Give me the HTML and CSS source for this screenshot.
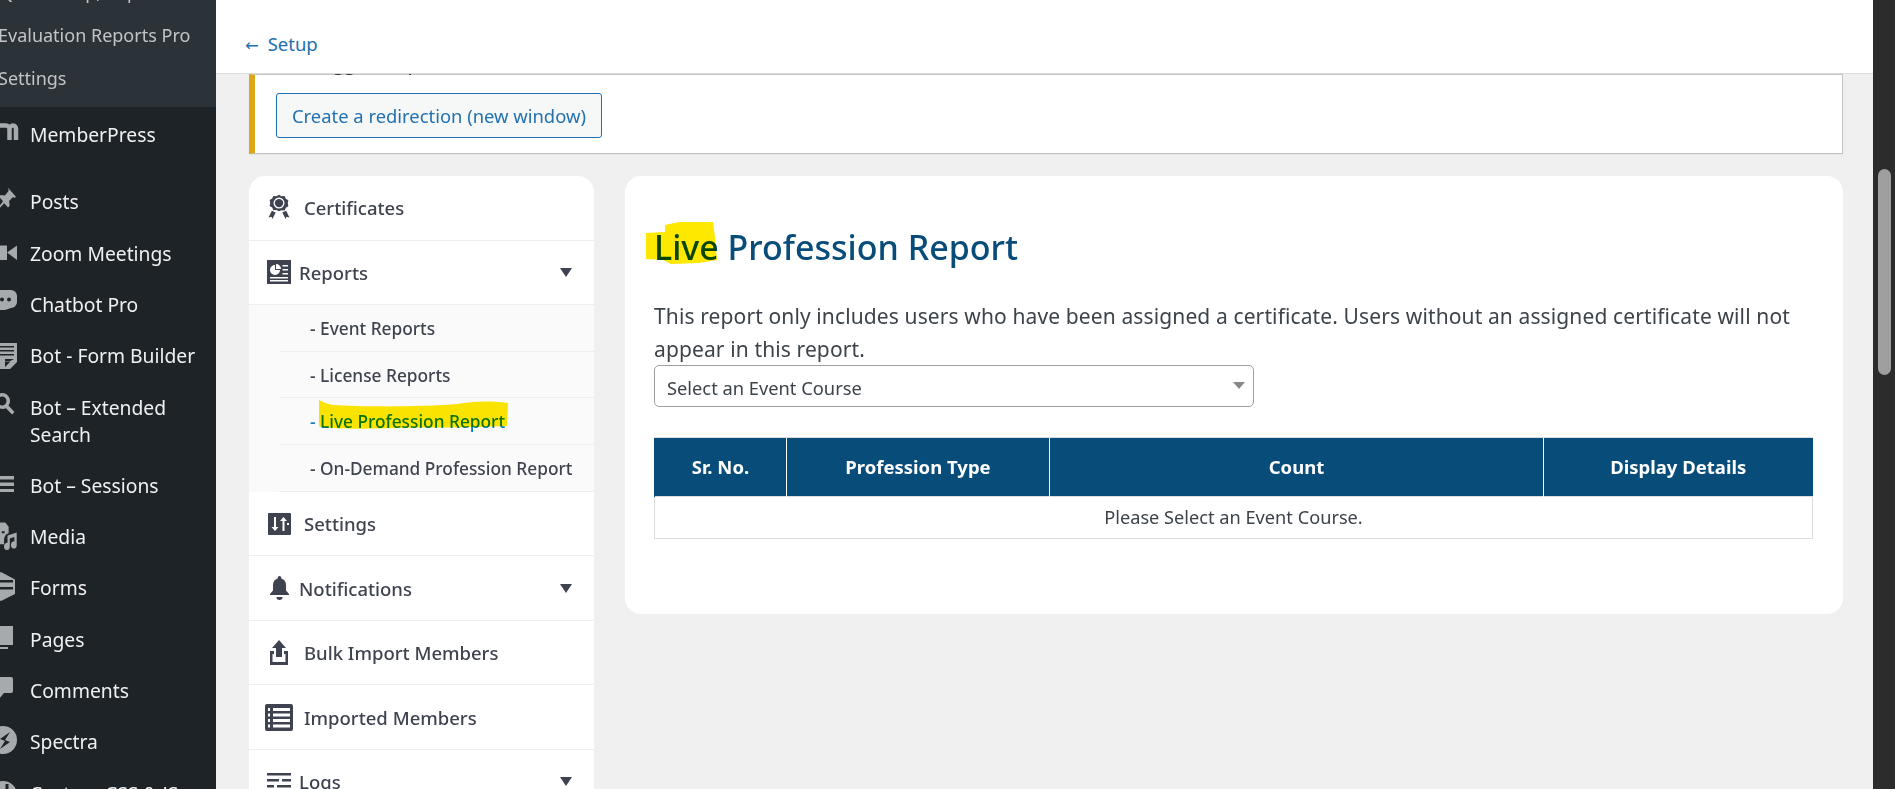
FILE: index.html
```html
<!DOCTYPE html>
<html lang="en">
<head>
<meta charset="UTF-8">
<meta name="viewport" content="width=device-width, initial-scale=1.0">
<title>Live Profession Report</title>
<link rel="stylesheet" href="styles.css">
</head>
<body>

<aside class="adminmenu">
  <div class="submenu">
    <div class="submenu-cut">Quiz Group, Rep</div>
    <a class="submenu-link">Evaluation Reports Pro</a>
    <a class="submenu-link">Settings</a>
  </div>
  <ul class="menu">
    <li class="menu-item menu-member">
      <svg class="menu-icon" viewBox="0 0 20 20"><path class="icon-stroke" d="M-4 .5H9a3.500 3.500 0 0 1 3.500 3.500V15M12.500 4a3.500 3.500 0 0 1 3.500-3.500a3 3.500 0 0 1 3 3.500V15"/></svg>
      <span>MemberPress</span>
    </li>
    <li class="menu-item menu-first">
      <svg class="menu-icon" viewBox="0 0 20 20"><path transform="translate(-1 -6) scale(1.05 1.2)" d="M11 1l8 8-1.500 1-1.300-.8-3.700 3.300.5 4-1.500 1.500-3.700-3.700L3 19l-1-1 4.700-5.300L3 9l1.500-1.500 4 .5 3.300-3.700L12 3z"/></svg>
      <span>Posts</span>
    </li>
    <li class="menu-item">
      <svg class="menu-icon" viewBox="0 0 20 20"><path d="M2 2.500h8v14.500H2zM10 9.500L20 2.500v14.500z"/></svg>
      <span>Zoom Meetings</span>
    </li>
    <li class="menu-item">
      <svg class="menu-icon" viewBox="0 0 20 20"><path fill-rule="evenodd" d="M0 -4H14a6 6 0 0 1 6 6V8a6 6 0 0 1-6 6L8 16H0zM5 3.500a2 2 0 1 0 0 4 2 2 0 0 0 0-4zm7 0a2 2 0 1 0 0 4 2 2 0 0 0 0-4z"/></svg>
      <span>Chatbot Pro</span>
    </li>
    <li class="menu-item">
      <svg class="menu-icon" viewBox="0 0 20 20"><path fill-rule="evenodd" d="M-2 -3H20V16L13 23H-2zM0 0v1.500H17V0zM0 4v1.500H17V4zM0 8v1.500H17V8zM8 13v2.500h4.500L17 13zM8 16v5l5-5z"/></svg>
      <span>Bot - Form Builder</span>
    </li>
    <li class="menu-item menu-tall">
      <svg class="menu-icon" viewBox="0 0 20 20"><path fill-rule="evenodd" d="M5 -4a8 8 0 0 1 6.500 12.600L17.500 15l-2.500 2.500-6-6.300A8 8 0 1 1 5 -4zm0 3.500a4.500 4.500 0 1 0 0 9 4.500 4.500 0 0 0 0-9z"/></svg>
      <span>Bot – Extended Search</span>
    </li>
    <li class="menu-item">
      <svg class="menu-icon" viewBox="0 0 20 20"><path d="M2 1h15v3.500H2zM2 7.500h15v3.500H2zM2 14h15v3H2z"/></svg>
      <span>Bot – Sessions</span>
    </li>
    <li class="menu-item">
      <svg class="menu-icon" viewBox="0 0 20 20"><path transform="translate(-1 -6) scale(1.15 1.45)" fill-rule="evenodd" d="M3 1h5l3 3v4.500A5 5 0 0 0 7 13v3H3zM5 7v1.500h2.500V7zM10 10l8-2v8.500a2.500 2.500 0 1 1-2-2.400V11l-4 1v5.500a2.500 2.500 0 1 1-2-2.400z"/></svg>
      <span>Media</span>
    </li>
    <li class="menu-item">
      <svg class="menu-icon" viewBox="0 0 20 20"><path fill-rule="evenodd" d="M4 -6L18 1.500V16L4 23-10 16V1.500zM-5 2V4.500H16V2zM-5 9V11.500H16V9z"/></svg>
      <span>Forms</span>
    </li>
    <li class="menu-item">
      <svg class="menu-icon" viewBox="0 0 20 20"><path d="M0 -3H16V16H0zM0 18h11v2H0z"/></svg>
      <span>Pages</span>
    </li>
    <li class="menu-item">
      <svg class="menu-icon" viewBox="0 0 20 20"><path d="M0 -3H14a2 2 0 0 1 2 2V11a2 2 0 0 1-2 2H7L2 19V13H0z"/></svg>
      <span>Comments</span>
    </li>
    <li class="menu-item">
      <svg class="menu-icon" viewBox="0 0 20 20"><path fill-rule="evenodd" d="M6 -6a14 14 0 1 1 0 28 14 14 0 0 1 0-28zM13 0L3 7l5 2-5 8 10-7-5-2z"/></svg>
      <span>Spectra</span>
    </li>
    <li class="menu-item">
      <svg class="menu-icon" viewBox="0 0 20 20"><path fill-rule="evenodd" d="M6 -2a14 14 0 1 1 0 28 14 14 0 0 1 0-28zM8.500 1v8h3V1z"/></svg>
      <span>Custom CSS &amp; JS</span>
    </li>
  </ul>
</aside>

<div class="page">
  <div class="topbar"><a class="back-link"><span class="back-arrow">←</span> Setup</a></div>

  <div class="wrap">
    <div class="notice">
      <div class="notice-cut">The suggested path</div>
      <a class="redirect-btn">Create a redirection (new window)</a>
    </div>

    <div class="columns">
      <nav class="side-card">
        <div class="side-row">
          <svg class="side-icon icon-award" viewBox="0 0 20 23"><path fill-rule="evenodd" d="M10 0l2.400 1.300 2.700-.3 1.100 2.500 2.300 1.400-.5 2.700.5 2.700-2.300 1.400-1.100 2.500-2.700-.3L10 15l-2.400-1.300-2.700.3-1.100-2.500L1.500 10.100 2 7.400l-.5-2.700 2.300-1.400L4.900 1l2.700.3zM10 2.500a5 5 0 1 0 0 10 5 5 0 0 0 0-10z"/><circle cx="10" cy="7.500" r="3.800"/><path d="M3.500 14.500l3.500 1.500-3 6-.8-2-2.700.6zM16.500 14.500L13 16l3 6 .8-2 2.700.6z"/></svg>
          <span>Certificates</span>
        </div>
        <div class="side-row side-parent">
          <svg class="side-icon icon-report" viewBox="0 0 24 24"><path fill-rule="evenodd" d="M0 0h24v24H0zM8 5a5 5 0 1 0 5 5H8zM9 4v5h5a5 5 0 0 0-5-5zM15.500 5h5.500v1.500h-5.500zM15.500 9h5.500v1.500h-5.500zM15.500 13h5.500v1.500h-5.500zM3 17h18v1.500H3zM3 20h18v1.500H3z"/></svg>
          <span>Reports</span>
          <i class="caret"></i>
        </div>
        <ul class="sub-list">
          <li class="sub-row">- Event Reports</li>
          <li class="sub-row">- License Reports</li>
          <li class="sub-row sub-active">- Live Profession Report
            <svg class="scribble scribble-sub" viewBox="0 0 189 30"><path d="M0 0C4 2 8 4 14 5c30 2 90 2 125-1 20-3 30-3 50-1l-1 23c-40 2-80 1-110 2-30 1-60 1-74-1-2 0-3 0-4-1z"/></svg>
          </li>
          <li class="sub-row">- On-Demand Profession Report</li>
        </ul>
        <div class="side-row">
          <svg class="side-icon icon-sliders" viewBox="0 0 23 22"><path fill-rule="evenodd" d="M1 0h21a1 1 0 0 1 1 1v20a1 1 0 0 1-1 1H1a1 1 0 0 1-1-1V1a1 1 0 0 1 1-1zM6 4v10H3.500L7 18l3.500-4H8V4zM15.500 4L12 8h2.500v10h2V8H19l-3.500-4zM19 10v2h2v-2z"/></svg>
          <span>Settings</span>
        </div>
        <div class="side-row side-parent">
          <svg class="side-icon icon-bell" viewBox="0 0 19 24"><path d="M9.500 0a1.800 1.800 0 0 1 1.800 1.800v.6c3 .8 4.700 3.300 4.700 6.600v5.500l3 3.500v1H0v-1l3-3.500V9c0-3.300 1.700-5.800 4.700-6.600v-.6A1.800 1.800 0 0 1 9.500 0zM6.500 21h6a3 3 0 0 1-6 0z"/></svg>
          <span>Notifications</span>
          <i class="caret"></i>
        </div>
        <div class="side-row">
          <svg class="side-icon icon-upload" viewBox="0 0 18 25"><path d="M9 0l7 8h-4v9H6V8H2zM0 11h4v3H2.500v8h13v-8H14v-3h4v14H0z"/></svg>
          <span>Bulk Import Members</span>
        </div>
        <div class="side-row">
          <svg class="side-icon icon-list" viewBox="0 0 28 27"><path fill-rule="evenodd" d="M2 0h24a2 2 0 0 1 2 2v23a2 2 0 0 1-2 2H2a2 2 0 0 1-2-2V2a2 2 0 0 1 2-2zM3 4v3h2V4zM8 4v3h17V4zM3 9.500v3h2v-3zM8 9.500v3h17v-3zM3 15v3h2v-3zM8 15v3h17v-3zM3 20.500v3h2v-3zM8 20.500v3h17v-3z"/></svg>
          <span>Imported Members</span>
        </div>
        <div class="side-row side-parent">
          <svg class="side-icon icon-logs" viewBox="0 0 24 18"><path d="M0 0h24v2.500H0zM0 6h12v2.500H0zM15 6h9v2.500h-9zM0 12h7v2.500H0zM10 12h14v2.500H10z"/></svg>
          <span>Logs</span>
          <i class="caret"></i>
        </div>
      </nav>

      <main class="report-card">
        <h1 class="report-title">Live Profession Report
          <svg class="scribble scribble-title" viewBox="0 0 71 42"><path d="M0 11L19 10 19 3 33 0 67 0 69 15 71 38 53 41 25 42 17 38 0 37z"/></svg>
        </h1>
        <p class="report-note">This report only includes users who have been assigned a certificate. Users without an assigned certificate will not appear in this report.</p>
        <div class="select-box">
          <select class="event-select">
            <option>Select an Event Course</option>
          </select>
        </div>
        <table class="report-table">
          <colgroup>
            <col class="col-no"><col class="col-type"><col class="col-count"><col class="col-details">
          </colgroup>
          <thead>
            <tr><th>Sr. No.</th><th>Profession Type</th><th>Count</th><th>Display Details</th></tr>
          </thead>
          <tbody>
            <tr><td colspan="4">Please Select an Event Course.</td></tr>
          </tbody>
        </table>
      </main>
    </div>
  </div>
</div>

<div class="scrollbar"><div class="scrollbar-thumb"></div></div>

</body>
</html>
```

FILE: styles.css
```css
html, body {
  height: 789px;
  overflow: hidden;
}
body {
  margin: 0;
  display: flex;
  font-family: "Noto Sans", sans-serif;
  background-color: #f0f0f0;
  color: #3c434a;
}
ul {
  list-style: none;
  margin: 0;
  padding: 0;
}

/* wp admin menu */
.adminmenu {
  width: 216px;
  flex: none;
  height: 789px;
  overflow: hidden;
  background-color: #1d2327;
}
.submenu {
  height: 107px;
  overflow: hidden;
  background-color: #2c3338;
  color: #c3c4c7;
  font-size: 18px;
}
.submenu-cut {
  height: 24px;
  margin-top: -20px;
  margin-bottom: 10px;
  line-height: 24px;
}
.submenu-link {
  display: block;
  height: 43px;
  line-height: 43px;
  margin-left: -2px;
  white-space: nowrap;
}
.menu {
  margin-left: -3px;
  padding-top: 2px;
  color: #f0f0f1;
  font-size: 19.300px;
}
.menu-item {
  display: flex;
  align-items: flex-start;
  gap: 13px;
  padding: 12.150px 0;
  line-height: 27px;
}
.menu-first {
  margin-top: 16px;
}
.menu-icon {
  width: 20px;
  height: 20px;
  flex: none;
  margin-top: 3.500px;
  fill: #a7aaad;
  overflow: visible;
}
.icon-stroke {
  fill: none;
  stroke: #a7aaad;
  stroke-width: 4.500;
}

/* page */
.page {
  flex: 1;
  min-width: 0;
}
.topbar {
  height: 74px;
  padding-left: 29px;
  box-sizing: border-box;
  background-color: #fff;
  border-bottom: 1px solid #dcdcde;
  line-height: 88px;
  position: relative;
  z-index: 1;
}
.back-link {
  color: #2271b1;
  font-size: 18.500px;
}
.back-arrow {
  font-family: "DejaVu Sans", sans-serif;
  font-size: 16.500px;
  margin-right: 4px;
}
.wrap {
  padding: 0 30px 0 33px;
}
.notice {
  height: 80px;
  box-sizing: border-box;
  padding-left: 21px;
  background-color: #fff;
  border: 1px solid #c3c4c7;
  border-left: 6px solid #dba617;
  box-shadow: 0 1px 1px rgba(0, 0, 0, 0.04);
}
.notice-cut {
  height: 24px;
  margin-top: -23px;
  line-height: 24px;
  font-size: 18.400px;
  color: #1d2327;
}
.redirect-btn {
  display: inline-block;
  margin-top: 17px;
  padding: 0 15px;
  height: 45px;
  box-sizing: border-box;
  line-height: 43px;
  color: #2271b1;
  background-color: #f6f7f7;
  border: 1px solid #2271b1;
  border-radius: 3px;
  font-size: 18.400px;
}
.columns {
  display: flex;
  align-items: flex-start;
  gap: 31px;
  margin-top: 22px;
}

/* left nav card */
.side-card {
  width: 345px;
  flex: none;
  background-color: #fff;
  border-radius: 16px 16px 0 0;
  overflow: hidden;
  font-size: 18.500px;
  font-weight: 500;
  color: #3f4350;
}
.side-row {
  display: grid;
  grid-template-columns: 35px 1fr;
  align-items: center;
  height: 64.500px;
  box-sizing: border-box;
  padding-left: 20px;
  border-bottom: 1px solid #eeeeee;
}
.side-parent {
  grid-template-columns: 30px 1fr auto;
}
.side-icon {
  fill: #3f4350;
}
.icon-award { width: 22px; height: 27px; margin-left: -1px; }
.icon-report { width: 24px; height: 24px; margin-left: -2px; }
.icon-sliders { width: 23px; height: 22px; margin-left: -1px; }
.icon-bell { width: 19px; height: 24px; margin-left: 1px; }
.icon-upload { width: 18px; height: 25px; margin-left: 1px; }
.icon-list { width: 28px; height: 27px; margin-left: -4px; }
.icon-logs { width: 24px; height: 18px; margin-left: -2px; }
.caret {
  margin-right: 22px;
  width: 0;
  height: 0;
  border-left: 6px solid transparent;
  border-right: 6px solid transparent;
  border-top: 9px solid #3f4350;
}
.sub-list {
  padding-left: 30px;
  background-color: #fafafa;
  font-size: 17.300px;
}
.sub-row {
  height: 46.700px;
  box-sizing: border-box;
  line-height: 47px;
  padding-left: 31px;
  border-bottom: 1px solid #eeeeee;
  white-space: nowrap;
  position: relative;
}
.sub-active {
  color: #0a7cc0;
}
.scribble {
  position: absolute;
  fill: #ffe800;
  mix-blend-mode: multiply;
  pointer-events: none;
}
.scribble-sub {
  left: 40px;
  top: 2px;
  width: 189px;
  height: 30px;
}

/* report card */
.report-card {
  flex: 1;
  min-width: 0;
  height: 438px;
  box-sizing: border-box;
  padding: 0 30px 0 29px;
  background-color: #fff;
  border-radius: 16px;
}
.report-title {
  position: relative;
  margin: 46px 0 0;
  line-height: 50px;
  font-size: 34px;
  font-weight: 500;
  color: #084c7a;
}
.scribble-title {
  left: -8px;
  top: 0;
  width: 71px;
  height: 42px;
}
.report-note {
  margin: 28px 0 0;
  font-size: 21px;
  line-height: 33px;
  letter-spacing: 0.12px;
  color: #3c434a;
}
.select-box {
  position: relative;
  width: 600px;
  margin-top: -1px;
}
.select-box::after {
  content: "";
  position: absolute;
  right: 9px;
  top: 17px;
  border-left: 6px solid transparent;
  border-right: 6px solid transparent;
  border-top: 7px solid #888;
}
.event-select {
  appearance: none;
  display: block;
  width: 100%;
  height: 42px;
  padding: 2px 12px 0;
  background-color: #fff;
  border: 1px solid #a0a0a0;
  border-radius: 5px;
  font-family: inherit;
  font-size: 18.300px;
  color: #3c434a;
}
.report-table {
  width: 100%;
  margin-top: 30px;
  border-collapse: collapse;
  table-layout: fixed;
  font-size: 18.200px;
}
.col-no { width: 132px; }
.col-type { width: 263px; }
.col-count { width: 494px; }
.col-details { width: 269px; }
.report-table th {
  height: 56px;
  padding: 0 0 2px;
  background-color: #084c7a;
  color: #fff;
  font-size: 18.500px;
  font-weight: 700;
  border: 1px solid #dddddd;
  border-width: 1px 0 0 1px;
}
.report-table th:first-child {
  border-left-color: #084c7a;
}
.report-table th + th {
  border-left-color: #fff;
}
.report-table td {
  height: 39px;
  padding: 0 0 2px;
  text-align: center;
  border: 1px solid #dddddd;
}

/* browser scrollbar */
.scrollbar {
  width: 22px;
  flex: none;
  height: 789px;
  background-color: #2c2c2c;
}
.scrollbar-thumb {
  width: 13px;
  height: 206px;
  margin: 169px 0 0 5px;
  background-color: #9f9f9f;
  border-radius: 7px;
}
```
